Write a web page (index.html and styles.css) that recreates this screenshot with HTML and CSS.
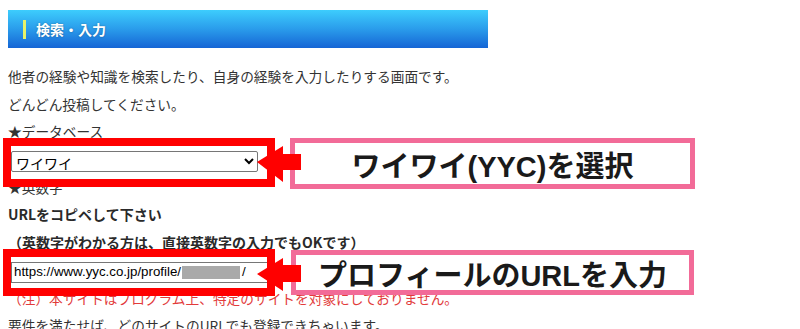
FILE: index.html
```html
<!DOCTYPE html>
<html>

<head>
	<meta charset="utf-8">
	<link rel="stylesheet" href="styles.css">
</head>

<body>
	<div class="page">
		<div class="heading"><span class="mark"></span>検索・入力</div>

		<p class="line">他者の経験や知識を検索したり、自身の経験を入力したりする画面です。</p>
		<p class="line">どんどん投稿してください。</p>
		<p class="line">★データベース</p>
		<p class="line">
			<select class="db">
				<option>ワイワイ</option>
			</select>
		</p>
		<p class="line">★英数字</p>
		<p class="line strong">URLをコピペして下さい</p>
		<p class="line strong">（英数字がわかる方は、直接英数字の入力でもOKです）</p>
		<p class="line">
			<span class="url">https://www.yyc.co.jp/profile/<span class="blur"></span>/</span>
		</p>
		<p class="line note">（注）本サイトはプログラム上、特定のサイトを対象にしておりません。</p>
		<p class="line">要件を満たせば、どのサイトのURLでも登録できちゃいます。</p>

		<!-- annotations drawn over the form -->
		<div class="frame frame1"></div>
		<div class="frame frame2"></div>
		<div class="callout callout1">ワイワイ(YYC)を選択</div>
		<div class="callout callout2">プロフィールのURLを入力</div>
		<svg class="arrow arrow1" width="44" height="36" viewBox="0 0 44 36">
			<polygon points="0,16 26,0 26,8 44,8 44,24 26,24 26,36" fill="#ff0000"/>
		</svg>
		<svg class="arrow arrow2" width="44" height="33" viewBox="0 0 44 33">
			<polygon points="0,16 26,0 26,7 44,7 44,24 26,24 26,33" fill="#ff0000"/>
		</svg>
	</div>
</body>

</html>
```

FILE: styles.css
```css
body {
	margin: 0;
	padding: 0;
	background: #fff;
	overflow: hidden;
	font-family: "Noto Sans CJK JP", "Liberation Sans", sans-serif;
	color: #333;
}
.page {
	position: relative;
	padding: 10px 8px;
	width: 784px;
	height: 329px;
	box-sizing: border-box;
}
.heading {
	width: 480px;
	height: 38px;
	background: linear-gradient(to bottom, #3dcdfd 0%, #2a9ceb 50%, #1565d5 100%);
	color: #fff;
	font-weight: bold;
	font-size: 14px;
	display: flex;
	align-items: center;
	text-shadow: 0 0 2px rgba(0, 0, 0, 0.35);
	margin-bottom: 15px;
}
.mark {
	width: 3px;
	height: 19px;
	background: #e6f36a;
	margin-left: 15px;
	margin-right: 10px;
}
.line {
	margin: 0;
	font-size: 13.7px;
	line-height: 27.7px;
	height: 27.7px;
	white-space: nowrap;
}
.strong {
	font-weight: bold;
	font-size: 14px;
	color: #2a2a2a;
}
.note {
	color: #e23b3b;
}
.db {
	margin-left: 3px;
	width: 247px;
	height: 21px;
	font-family: "Noto Sans CJK JP", sans-serif;
	font-size: 14px;
	color: #000;
	border: 1px solid #767676;
	border-radius: 2px;
	background: #fff;
	vertical-align: middle;
	padding: 0;
}
.url {
	display: inline-flex;
	align-items: center;
	margin-left: 3px;
	width: 258px;
	height: 21px;
	box-sizing: border-box;
	border: 1px solid #767676;
	padding: 0 2px;
	font-family: "Liberation Sans", Arial, sans-serif;
	font-size: 13.3px;
	color: #000;
	vertical-align: middle;
	overflow: hidden;
}
.blur {
	display: inline-block;
	width: 58px;
	height: 13px;
	background: #a9a9a9;
	margin: 0 2px 0 1px;
}
.frame {
	position: absolute;
	left: 3px;
	width: 272px;
	border: 8px solid #ff0000;
	box-sizing: border-box;
}
.frame1 {
	top: 138px;
	height: 49px;
}
.frame2 {
	top: 249px;
	height: 47px;
}
.callout {
	position: absolute;
	box-sizing: border-box;
	border: 5px solid #f26b98;
	background: #fff;
	display: flex;
	align-items: center;
	justify-content: center;
	font-family: "Liberation Sans", "Noto Sans CJK JP", sans-serif;
	font-weight: 600;
	font-size: 29px;
	color: #1a1a1a;
}
.callout1 {
	left: 290px;
	top: 138px;
	width: 405px;
	height: 51px;
}
.callout2 {
	left: 291px;
	top: 250px;
	width: 403px;
	height: 45px;
}
.arrow {
	position: absolute;
	left: 257px;
}
.arrow1 {
	top: 146px;
}
.arrow2 {
	top: 258px;
}
```
